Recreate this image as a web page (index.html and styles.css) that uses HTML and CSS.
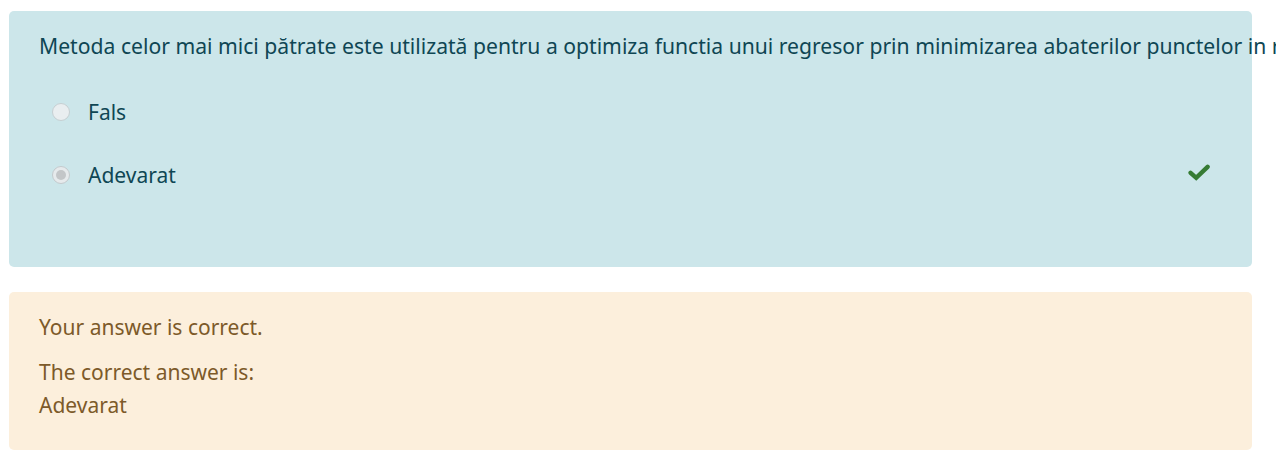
FILE: index.html
```html
<!DOCTYPE html>
<html lang="ro">
<head>
<meta charset="utf-8">
<title>Question</title>
<link rel="stylesheet" href="styles.css">
</head>
<body>
<div class="page">
  <div class="formulation">
    <div class="qtext">Metoda celor mai mici pătrate este utilizată pentru a optimiza functia unui regresor prin minimizarea abaterilor punctelor in raport cu dreapta de regresie.</div>
    <div class="answers">
      <div class="option">
        <span class="radio"></span>
        <span class="label">Fals</span>
      </div>
      <div class="option">
        <span class="radio checked"></span>
        <span class="label">Adevarat</span>
        <svg class="check" viewBox="0 0 22 17" width="22" height="17" aria-hidden="true">
          <path d="M2.6 8.8 L8.2 13.8 L19.6 2.8" fill="none" stroke="#367b34" stroke-width="4.4" stroke-linecap="round" stroke-linejoin="miter"/>
        </svg>
      </div>
    </div>
  </div>
  <div class="outcome">
    <p class="feedback">Your answer is correct.</p>
    <p class="rightanswer">The correct answer is:<br>Adevarat</p>
  </div>
</div>
</body>
</html>
```
FILE: styles.css
```css
html, body {
  margin: 0;
  padding: 0;
  overflow: hidden;
  background: #ffffff;
}
body {
  font-family: "Noto Sans", "Open Sans", sans-serif;
  font-size: 21px;
  line-height: 33px;
}
.page {
  padding: 11px 24px 0 9px;
  display: flex;
  flex-direction: column;
  gap: 25px;
}
.formulation {
  background: #cce6ea;
  color: #0f4654;
  border-radius: 5px;
  height: 256px;
  box-sizing: border-box;
  padding: 18px 0 0 30px;
  overflow: visible;
}
.qtext {
  white-space: nowrap;
  font-size: 21.15px;
}
.answers {
  display: flex;
  flex-direction: column;
  gap: 30px;
  margin-top: 34px;
}
.option {
  display: flex;
  align-items: center;
  height: 33px;
  padding-left: 13px;
  padding-right: 42px;
}
.radio {
  width: 16px;
  height: 16px;
  border: 1px solid #c6cfd2;
  border-radius: 50%;
  background: #e9eef0;
  flex: none;
  box-sizing: content-box;
  margin-top: -2px;
  position: relative;
}
.radio.checked {
  background: #e6eaec;
  border-color: #c4cacd;
}
.radio.checked::after {
  content: "";
  position: absolute;
  left: 3px;
  top: 3px;
  width: 10px;
  height: 10px;
  border-radius: 50%;
  background: #c3c6c8;
}
.label {
  margin-left: 18px;
}
.check {
  margin-left: auto;
  margin-top: -7px;
  flex: none;
}
.outcome {
  background: #fcefdc;
  color: #7d5a29;
  border-radius: 5px;
  height: 158px;
  box-sizing: border-box;
  padding: 19px 30px 0 30px;
}
.outcome p {
  margin: 0 0 12px 0;
}
```
